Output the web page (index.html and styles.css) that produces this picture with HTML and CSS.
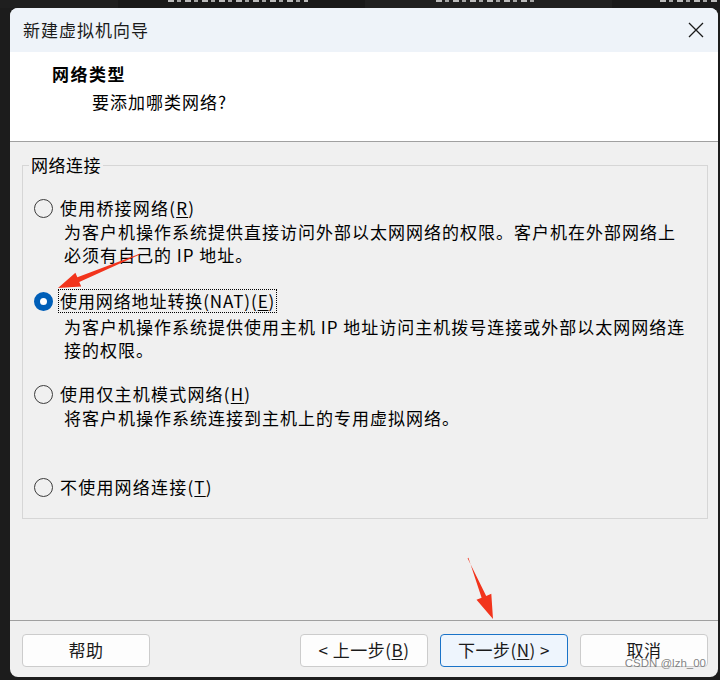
FILE: index.html
```html
<!DOCTYPE html>
<html lang="zh-CN">
<head>
<meta charset="utf-8">
<title>新建虚拟机向导</title>
<link rel="stylesheet" href="styles.css">
</head>
<body>
<div class="topstrip">
  <div class="tab t1"></div>
  <div class="tab t2"><span class="frag f1"></span></div>
  <div class="tab t3"><span class="frag f2"></span></div>
  <div class="tab t4"><span class="frag f3"></span></div>
</div>
<div class="dialog">
  <div class="titlebar">
    <span class="title">新建虚拟机向导</span>
    <svg class="close" width="16" height="16" viewBox="0 0 16 16"><path d="M1 1 L15 15 M15 1 L1 15" stroke="#1a1a1a" stroke-width="1.3" fill="none"/></svg>
  </div>
  <div class="header">
    <div class="heading">网络类型</div>
    <div class="subtitle">要添加哪类网络?</div>
  </div>
  <div class="body">
    <fieldset class="group">
      <legend>网络连接</legend>
      <div class="options">
        <div class="option">
          <div class="row"><span class="radio"></span><span class="label">使用桥接网络(<u>R</u>)</span></div>
          <div class="desc">为客户机操作系统提供直接访问外部以太网网络的权限。客户机在外部网络上<br>必须有自己的 IP 地址。</div>
        </div>
        <div class="option">
          <div class="row"><span class="radio on"></span><span class="label focus">使用网络地址转换(NAT)(<u>E</u>)</span></div>
          <div class="desc d2">为客户机操作系统提供使用主机 IP 地址访问主机拨号连接或外部以太网网络连<br>接的权限。</div>
        </div>
        <div class="option">
          <div class="row"><span class="radio"></span><span class="label">使用仅主机模式网络(<u>H</u>)</span></div>
          <div class="desc">将客户机操作系统连接到主机上的专用虚拟网络。</div>
        </div>
        <div class="option last">
          <div class="row"><span class="radio"></span><span class="label">不使用网络连接(<u>T</u>)</span></div>
        </div>
      </div>
    </fieldset>
  </div>
  <div class="footer">
    <button class="btn">帮助</button>
    <div class="spacer"></div>
    <button class="btn">&lt; 上一步(<u>B</u>)</button>
    <button class="btn primary">下一步(<u>N</u>) &gt;</button>
    <button class="btn">取消</button>
  </div>
  <div class="watermark">CSDN @lzh_00</div>
</div>
<svg class="arrows" width="720" height="680" viewBox="0 0 720 680">
  <polygon fill="#f2341c" points="140.2,253.6 77.34,277.3 75.4,272.7 58,288 81.2,286.5 79.26,281.9 139.8,254.6"/>
  <polygon fill="#f2341c" points="468.4,557.8 481.6,597.7 476.5,599.8 493,619 491.3,593.8 486.2,595.9 467.6,558.2"/>
</svg>
</body>
</html>
```
FILE: styles.css
```css
html, body {
  margin: 0;
  padding: 0;
}
body {
  width: 720px;
  height: 680px;
  background: #1c1c1c;
  font-family: "Noto Sans CJK SC", "Noto Sans", sans-serif;
  color: #000;
  position: relative;
  overflow: hidden;
}
.topstrip {
  height: 8px;
  display: flex;
  overflow: hidden;
}
.tab {
  height: 8px;
  position: relative;
}
.t1 { width: 122px; background: #1f1f1f; }
.t2 { width: 254px; background: #191919; }
.t3 { width: 255px; background: #202020; }
.t4 { flex: 1; background: #1a1a1a; }
.frag {
  display: block;
  height: 2px;
  margin-top: 0;
  background: repeating-linear-gradient(90deg, #d8d8d8 0 6px, transparent 6px 9px, #bdbdbd 9px 13px, transparent 13px 17px);
  opacity: 0.85;
}
.f1 { margin-left: 50px; width: 140px; }
.f2 { margin-left: 71px; width: 99px; }
.f3 { margin-left: 48px; width: 60px; }

.dialog {
  margin-left: 10px;
  width: 708px;
  height: 669px;
  border-radius: 8px;
  overflow: hidden;
  display: flex;
  flex-direction: column;
  position: relative;
  background: #f0f0f0;
}
.titlebar {
  height: 44px;
  flex: none;
  background: #eef3f9;
  display: flex;
  align-items: center;
  justify-content: space-between;
  padding: 0 14px 0 13px;
}
.title {
  font-size: 17px;
  letter-spacing: 1px;
  line-height: 20px;
  color: #1a1a1a;
}
.close {
  display: block;
  width: 16px;
  height: 16px;
}
.header {
  flex: none;
  background: #ffffff;
  border-bottom: 1px solid #a0a0a0;
  padding: 12px 0 0 42px;
  box-sizing: border-box;
  height: 90px;
}
.heading {
  font-size: 17px;
  font-weight: bold;
  letter-spacing: 1.5px;
  line-height: 20px;
}
.subtitle {
  font-size: 17px;
  letter-spacing: 1px;
  line-height: 20px;
  margin-top: 8px;
  padding-left: 40px;
}
.body {
  height: 478px;
  flex: none;
  box-sizing: border-box;
  padding: 13px 10px 0 12px;
}
.group {
  margin: 0;
  padding: 0;
  border: 1px solid #d6d6d6;
  min-width: 0;
}
.group legend {
  font-size: 17px;
  letter-spacing: 0.5px;
  line-height: 20px;
  padding: 0 2px 0 2px;
  margin-left: 6px;
}
.options {
  padding: 21px 0 19px 11px;
}
.option {
  height: 70px;
  margin-bottom: 23px;
}
.option.last {
  height: 24px;
  margin-bottom: 0;
}
.row {
  display: flex;
  align-items: center;
  height: 24px;
}
.radio {
  width: 17px;
  height: 17px;
  border: 1px solid #3c3c3c;
  border-radius: 50%;
  flex: none;
  background: transparent;
}
.radio.on {
  width: 7px;
  height: 7px;
  border: 6px solid #005fb8;
  background: #ffffff;
}
.label {
  margin-left: 5px;
  font-size: 17px;
  letter-spacing: 1.2px;
  line-height: 22px;
  padding: 0 1px;
  border: 1px dotted transparent;
}
.label.focus {
  border-color: #000;
  letter-spacing: 0.9px;
}
.label u, .btn u {
  text-decoration: underline;
  text-underline-offset: 2px;
}
.desc {
  margin-left: 30px;
  font-size: 17px;
  letter-spacing: 1px;
  line-height: 23px;
}
.desc.d2 {
  margin-top: 2px;
}
.footer {
  height: 57px;
  flex: none;
  box-sizing: border-box;
  border-top: 1px solid #a0a0a0;
  display: flex;
  align-items: flex-start;
  padding: 13px 10px 0 12px;
  gap: 12px;
}
.spacer {
  flex: 1;
}
.btn {
  width: 128px;
  height: 33px;
  box-sizing: border-box;
  border: 1px solid #cccccc;
  border-radius: 4px;
  background: #fdfdfd;
  font-family: "Noto Sans CJK SC", "Noto Sans", sans-serif;
  font-size: 17px;
  letter-spacing: 0.5px;
  color: #1a1a1a;
  padding: 0 0 2px 0;
  line-height: 20px;
}
.btn.primary {
  border-color: #1a73c8;
  background: #eef5fd;
}
.watermark {
  position: absolute;
  right: 12px;
  bottom: 7px;
  font-family: "Liberation Sans", sans-serif;
  font-size: 11.5px;
  color: rgba(110, 110, 110, 0.85);
  line-height: 13px;
}
.arrows {
  position: absolute;
  left: 0;
  top: 0;
  pointer-events: none;
}
```
